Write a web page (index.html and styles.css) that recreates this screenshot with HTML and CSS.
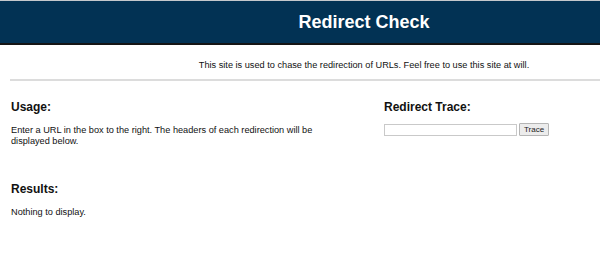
FILE: index.html
```html
<!DOCTYPE html>
<html lang="en">
<head>
  <meta charset="UTF-8">
  <title>Redirect Check</title>
  <link rel="stylesheet" href="styles.css">
</head>
<body>
  <div class="banner">
    <h1 class="title">Redirect Check</h1>
  </div>

  <p class="intro">This site is used to chase the redirection of URLs. Feel free to use this site at will.</p>
  <hr class="rule">

  <div class="content">
    <div class="col-left">
      <h2>Usage:</h2>
      <p>Enter a URL in the box to the right. The headers of each redirection will be displayed below.</p>

      <h2 class="results-title">Results:</h2>
      <p>Nothing to display.</p>
    </div>

    <div class="col-right">
      <h2>Redirect Trace:</h2>
      <form class="trace-form" onsubmit="return false">
        <input type="text" class="url-input">
        <button type="submit" class="trace-btn">Trace</button>
      </form>
    </div>
  </div>
</body>
</html>
```

FILE: styles.css
```css
* {
  box-sizing: border-box;
}

body {
  margin: 0;
  font-family: 'Liberation Sans', Arial, sans-serif;
  font-size: 9.2px;
  color: #111;
  background: #fff;
}

.banner {
  height: 45px;
  background: #023254;
  border-top: 1px solid #c4c8cc;
  border-bottom: 2px solid #151515;
  display: flex;
  align-items: center;
  justify-content: center;
  padding-left: 128px;
}

.title {
  margin: 0;
  color: #fff;
  font-size: 18px;
  font-weight: bold;
}

.intro {
  margin: 14px 0 0;
  padding-left: 128px;
  text-align: center;
  line-height: 12px;
}

.rule {
  margin: 8px 0 0 10px;
  border: 0;
  border-top: 2px solid #dcdcdc;
}

.content {
  display: flex;
  padding: 0 11px;
}

.col-left {
  width: 330px;
}

.col-right {
  margin-left: 43px;
}

h2 {
  margin: 19px 0 0;
  font-size: 12px;
  font-weight: bold;
}

.col-left p {
  margin: 11px 0 0;
  line-height: 11px;
  width: 310px;
}

.results-title {
  margin-top: 35px;
}

.trace-form {
  display: flex;
  align-items: center;
  margin-top: 9px;
}

.url-input {
  width: 133px;
  height: 12px;
  border: 1px solid #c9c9c9;
  padding: 0;
}

.trace-btn {
  margin-left: 2px;
  height: 13px;
  padding: 0 4px;
  font-family: 'Liberation Sans', Arial, sans-serif;
  font-size: 8px;
  color: #222;
  background: #ececec;
  border: 1px solid #b5b5b5;
  border-radius: 1px;
}
```
